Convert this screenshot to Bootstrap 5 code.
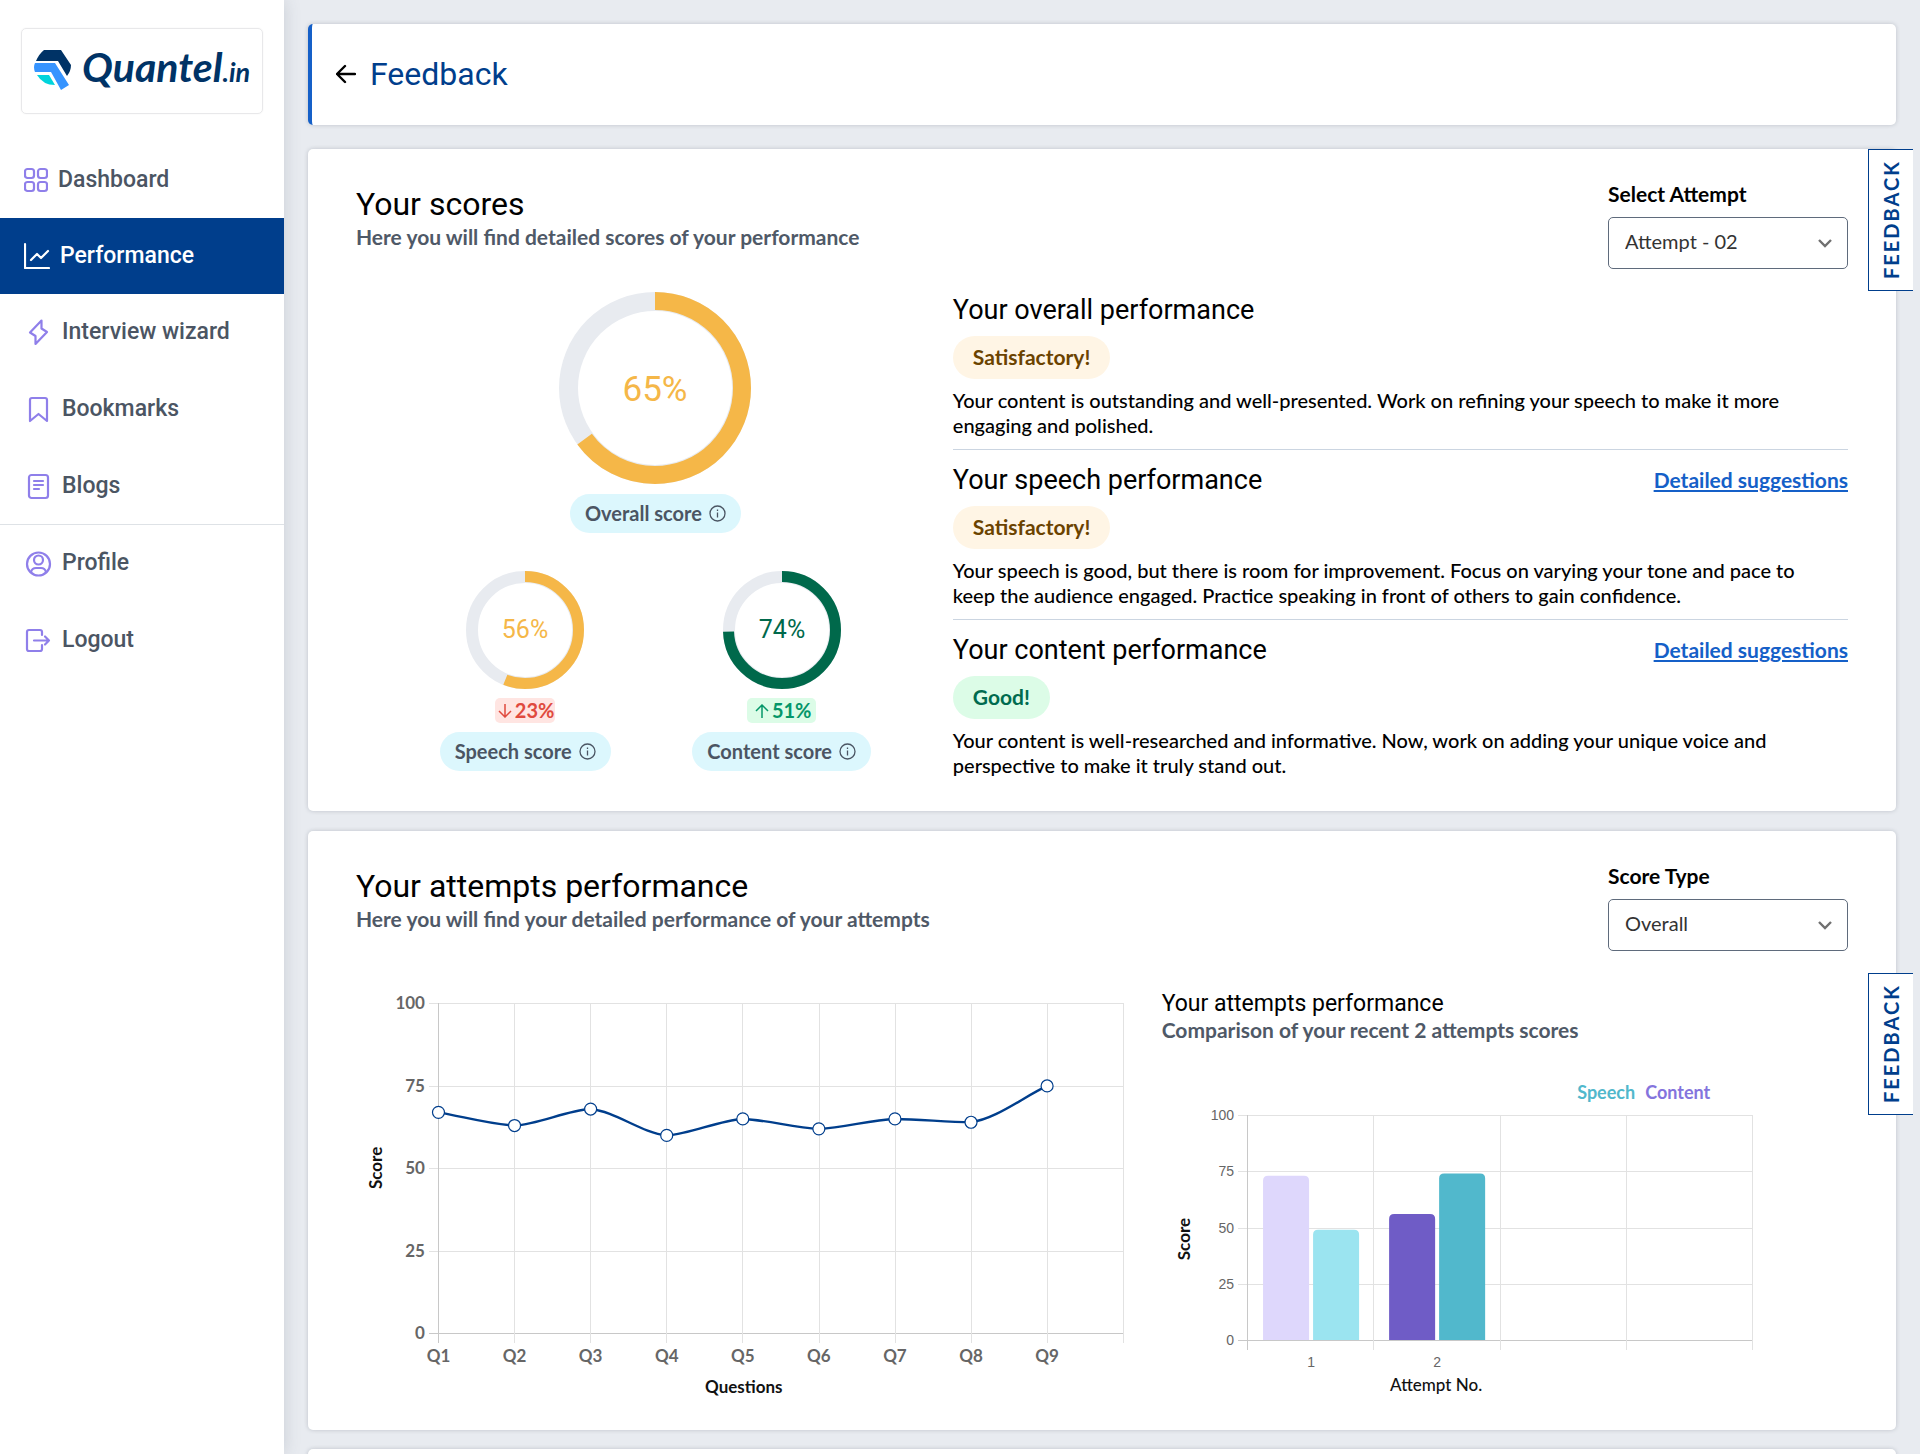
<!DOCTYPE html>
<html lang="en">
<head>
<meta charset="utf-8">
<meta name="viewport" content="width=device-width, initial-scale=1">
<title>Feedback - Quantel.in</title>
<link href="https://cdn.jsdelivr.net/npm/bootstrap@5.3.0/dist/css/bootstrap.min.css" rel="stylesheet">
<style>
:root{--navy:#003e8c;--blue:#1560c8;--violet:#8f7fea;--slate:#4b5563}
body{background:#e8ebf0;color:#000;font-family:Lato,"Open Sans",sans-serif;font-size:20px;line-height:25px}
h1,h2,h3,h4,.side-nav{font-family:Roboto,"Liberation Sans",sans-serif;font-weight:400;margin:0}
.side-panel{width:284px;background:#fff;box-shadow:0 0 16px rgba(60,70,90,.18)}
.brand-box{margin:28px 21px 27px;height:86px;border:1px solid #e8e8ea;border-radius:5px;padding:0 10px 3px 12px;box-shadow:0 0 2px rgba(0,0,0,.05);color:#003366;text-decoration:none}
.brand-name{font-size:41px;line-height:48px;font-weight:700;font-style:italic;margin-left:3px}
.brand-tld{font-size:27px}
.side-nav .nav-link{height:77px;padding:0 24px;color:var(--slate);font-size:23px;line-height:28px;font-weight:500;display:flex;align-items:center;gap:10px;border-radius:0}
.side-nav .nav-link.active{background:var(--navy);color:#fff}
.side-nav .nav-link.tight{height:76px}
.side-nav svg{flex:none;fill:none;stroke:var(--violet);stroke-width:2.2;stroke-linecap:round;stroke-linejoin:round}
.side-nav .active svg{stroke:#fff}
.main-area{padding:24px 24px 0}
.panel{background:#fff;border-radius:5px;box-shadow:0 0 4px rgba(40,50,70,.22);position:relative}
.head-panel{height:101px;border-left:4px solid var(--blue);padding:0 24px 2px;margin-bottom:24px;gap:14px}
.head-panel h1{color:var(--navy)}
.panel-body{padding:32px 48px}
.scores-panel{margin-bottom:20px;padding-bottom:33px}
.title-lg{font-size:32px;line-height:40px}
.title-md{font-size:27px;line-height:36px}
.title-sm{font-size:23px;line-height:27px}
.head-text{padding-top:3px}
.note{color:#4f5967;font-weight:700;font-size:21px}
.picker{width:240px}
.picker label{font-weight:700;margin-bottom:11px;display:block;font-size:21px}
.picker .form-select{height:52px;border:1px solid #5f6b7c;border-radius:5px;font-size:20px;padding:0 44px 4px 16px;color:#333;background-size:20px;background-position:right 12px center;background-image:url("data:image/svg+xml,%3csvg xmlns='http://www.w3.org/2000/svg' viewBox='0 0 20 20'%3e%3cpath fill='none' stroke='%23707070' stroke-width='2.4' d='M4 7l6 6 6-6'/%3e%3c/svg%3e")}
.scores-row{padding-top:23px}
.scores-col{width:40%;padding-left:2px}
.verdict-col{width:60%}
.big-ring{margin-bottom:10px}
.small-rings{margin-top:38px}
.pill-info{background:#dcf7fd;color:#4b5563;font-weight:700;height:39px;border-radius:20px;padding:0 15px;display:inline-flex;align-items:center;gap:7px;border:0}
.delta{font-weight:700;height:25px;border-radius:5px;display:flex;align-items:center;gap:3px;margin:9px 0}
.delta.down{background:#ffe5e2;color:#e04a3e;padding:0 1px 0 3px}
.delta.up{background:#dcfce7;color:#059669;padding:0 5px 0 8px}
.ring text{font-family:Roboto,sans-serif;text-anchor:middle}
.verdict{display:inline-flex;align-items:center;height:43px;border-radius:22px;padding:0 20px 2px;font-weight:700;font-size:21px;margin:8px 0 9px}
.verdict.fair{background:#fff5e5;color:#6b4300}
.verdict.fine{background:#dcfce7;color:#006b4f}
.verdict-item + .verdict-item{border-top:1px solid #cbd5e1;margin-top:11px;padding-top:12px}
.verdict-text{font-weight:500;margin:0;padding-right:24px}
.more-link{color:var(--blue);font-weight:700;font-size:21px;padding-bottom:2px}
.edge-tab{position:absolute;right:-17px;width:45px;height:142px;background:#fff;border:1px solid var(--navy);border-left-width:0;color:var(--navy);font-weight:700;font-size:20px;letter-spacing:2px;writing-mode:vertical-rl;transform:rotate(180deg);padding:0;text-align:center}
.tab-top{top:0}
.tab-mid{top:142px}
.charts-row{margin-top:35px}
.line-col{width:54%;padding-right:32px}
.bar-col{width:46%;padding-top:4px}
.bar-col .plot{margin-top:32px}
.plot{display:block;width:100%;height:auto}
.plot text{font-size:17px;font-weight:700;fill:#666}
.plot .axis-name{fill:#111}
.plot .plain{font-weight:500}
.plot .key-a,.plot .key-b{font-size:18px;fill:#51b8cc}
.plot .key-b{fill:#8474dd}
.plot .tick-sm{font-family:"Liberation Sans",sans-serif;font-size:14px;font-weight:400}
.next-panel{margin-top:19px;height:200px}
</style>
<script src="https://cdn.jsdelivr.net/npm/bootstrap@5.3.0/dist/js/bootstrap.bundle.min.js"></script>
</head>
<body>
<div class="d-flex vh-100 overflow-hidden">
  <aside class="side-panel flex-shrink-0 z-1">
    <a class="brand-box d-flex align-items-center" href="#">
      <svg class="flex-shrink-0 me-2" width="37" height="40" viewBox="0 0 37 40" aria-hidden="true"><path fill="#003366" d="M10 0h17l10 15q0 6-4 11l-9-15H2q3-7 8-11z"/><path fill="#3694ff" d="M1 13h20l14 22-8 5-10-18H1q-2-5 0-9z"/><path fill="#00d4dc" d="M3 25h12l6 10q-12 0-18-10z"/></svg>
      <span class="brand-name">Quantel<span class="brand-tld">.in</span></span>
    </a>
    <nav class="side-nav nav flex-column">
      <a class="nav-link" href="#"><svg width="24" height="26" viewBox="0 0 24 26"><rect x="1" y="2" width="9" height="9" rx="2.5"/><rect x="14" y="2" width="9" height="9" rx="2.5"/><rect x="1" y="15" width="9" height="9" rx="2.5"/><rect x="14" y="15" width="9" height="9" rx="2.5"/></svg>Dashboard</a>
      <a class="nav-link active tight" aria-current="page" href="#"><svg width="26" height="28" viewBox="0 0 26 28"><path d="M1 2v24h24M7 18l6-6 4 4 7-7"/></svg>Performance</a>
      <a class="nav-link tight" href="#"><svg width="28" height="28" viewBox="0 0 28 28"><path d="M17.500 2.500L6 14.500l5.500 3.500v8L23 14l-5.500-3.500z"/></svg>Interview wizard</a>
      <a class="nav-link" href="#"><svg width="28" height="28" viewBox="0 0 28 28"><path d="M6 26V5a2 2 0 0 1 2-2h13a2 2 0 0 1 2 2v21l-8.500-7z"/></svg>Bookmarks</a>
      <a class="nav-link" href="#"><svg width="28" height="28" viewBox="0 0 28 28"><rect x="5" y="3" width="19" height="23" rx="2.500"/><path d="M10 9h9M10 13h9M10 17h5"/></svg>Blogs</a>
      <a class="nav-link border-top" href="#"><svg width="28" height="28" viewBox="0 0 28 28"><circle cx="14.500" cy="15" r="11.500"/><circle cx="14.500" cy="11" r="4.500"/><path d="M7 23q1-4 5-4h5q4 0 5 4"/></svg>Profile</a>
      <a class="nav-link" href="#"><svg width="28" height="28" viewBox="0 0 28 28"><path d="M18 9V6a2 2 0 0 0-2-2H5a2 2 0 0 0-2 2v17a2 2 0 0 0 2 2h11a2 2 0 0 0 2-2v-4M10 14.500h15M21 10.500l4 4-4 4"/></svg>Logout</a>
    </nav>
  </aside>

  <main class="main-area flex-grow-1">
    <header class="panel head-panel d-flex align-items-center">
      <a href="#" class="lh-1 text-black" aria-label="Back"><svg class="d-block" width="20" height="20" viewBox="0 0 20 20" fill="none" stroke="currentColor" stroke-width="2.400" stroke-linecap="round" stroke-linejoin="round"><path d="M19 10H1M9 2l-8 8 8 8"/></svg></a>
      <h1 class="title-lg">Feedback</h1>
    </header>

    <section class="panel panel-body scores-panel">
      <button type="button" class="edge-tab tab-top">FEEDBACK</button>
      <div class="d-flex justify-content-between">
        <div class="head-text">
          <h2 class="title-lg">Your scores</h2>
          <div class="note">Here you will find detailed scores of your performance</div>
        </div>
        <div class="picker">
          <label for="attempt">Select Attempt</label>
          <select id="attempt" class="form-select"><option>Attempt - 02</option></select>
        </div>
      </div>
      <div class="d-flex scores-row">
        <div class="scores-col">
          <div class="d-flex flex-column align-items-center">
            <svg class="ring big-ring" width="192" height="192" viewBox="0 0 192 192" fill="none"><circle cx="96" cy="96" r="86.500" stroke="#e8ebf0" stroke-width="19"/><circle cx="96" cy="96" r="87" stroke="#f5b748" stroke-width="18" pathLength="100" stroke-dasharray="65 35" transform="rotate(-90 96 96)"/><text x="96" y="109" font-size="35" fill="#f5b748">65%</text></svg>
            <button type="button" class="pill-info">Overall score <svg width="17" height="17" viewBox="0 0 17 17" fill="none" stroke="currentColor" stroke-width="1.300"><circle cx="8.500" cy="8.500" r="7.500"/><path d="M8.500 7.500v5M8.500 4.500v1.500"/></svg></button>
          </div>
          <div class="d-flex justify-content-evenly small-rings">
            <div class="d-flex flex-column align-items-center">
              <svg class="ring" width="118" height="118" viewBox="0 0 118 118" fill="none"><circle cx="59" cy="59" r="53" stroke="#e8ebf0" stroke-width="12"/><circle cx="59" cy="59" r="53.500" stroke="#f5b748" stroke-width="11" pathLength="100" stroke-dasharray="56 44" transform="rotate(-90 59 59)"/><text x="59" y="67" font-size="25" fill="#f5b748">56%</text></svg>
              <div class="delta down"><svg width="14" height="14" viewBox="0 0 14 14" fill="none" stroke="currentColor" stroke-width="1.500"><path d="M7 0v13M1 7l6 6 6-6"/></svg>23%</div>
              <button type="button" class="pill-info">Speech score <svg width="17" height="17" viewBox="0 0 17 17" fill="none" stroke="currentColor" stroke-width="1.300"><circle cx="8.500" cy="8.500" r="7.500"/><path d="M8.500 7.500v5M8.500 4.500v1.500"/></svg></button>
            </div>
            <div class="d-flex flex-column align-items-center">
              <svg class="ring" width="118" height="118" viewBox="0 0 118 118" fill="none"><circle cx="59" cy="59" r="53" stroke="#e8ebf0" stroke-width="12"/><circle cx="59" cy="59" r="53.500" stroke="#00694b" stroke-width="11" pathLength="100" stroke-dasharray="74.500 25.500" transform="rotate(-90 59 59)"/><text x="59" y="67" font-size="25" fill="#00694b">74%</text></svg>
              <div class="delta up"><svg width="14" height="14" viewBox="0 0 14 14" fill="none" stroke="currentColor" stroke-width="1.500"><path d="M7 14V1M1 7l6-6 6 6"/></svg>51%</div>
              <button type="button" class="pill-info">Content score <svg width="17" height="17" viewBox="0 0 17 17" fill="none" stroke="currentColor" stroke-width="1.300"><circle cx="8.500" cy="8.500" r="7.500"/><path d="M8.500 7.500v5M8.500 4.500v1.500"/></svg></button>
            </div>
          </div>
        </div>
        <div class="verdict-col">
          <div class="verdict-item">
            <h3 class="title-md">Your overall performance</h3>
            <div class="verdict fair">Satisfactory!</div>
            <p class="verdict-text">Your content is outstanding and well-presented. Work on refining your speech to make it more engaging and polished.</p>
          </div>
          <div class="verdict-item">
            <div class="d-flex justify-content-between align-items-center"><h3 class="title-md">Your speech performance</h3><a class="more-link" href="#">Detailed suggestions</a></div>
            <div class="verdict fair">Satisfactory!</div>
            <p class="verdict-text">Your speech is good, but there is room for improvement. Focus on varying your tone and pace to keep the audience engaged. Practice speaking in front of others to gain confidence.</p>
          </div>
          <div class="verdict-item">
            <div class="d-flex justify-content-between align-items-center"><h3 class="title-md">Your content performance</h3><a class="more-link" href="#">Detailed suggestions</a></div>
            <div class="verdict fine">Good!</div>
            <p class="verdict-text">Your content is well-researched and informative. Now, work on adding your unique voice and perspective to make it truly stand out.</p>
          </div>
        </div>
      </div>
    </section>

    <section class="panel panel-body">
      <button type="button" class="edge-tab tab-mid">FEEDBACK</button>
      <div class="d-flex justify-content-between">
        <div class="head-text">
          <h2 class="title-lg">Your attempts performance</h2>
          <div class="note">Here you will find your detailed performance of your attempts</div>
        </div>
        <div class="picker">
          <label for="kind">Score Type</label>
          <select id="kind" class="form-select"><option>Overall</option></select>
        </div>
      </div>
      <div class="d-flex align-items-start charts-row">
        <div class="line-col"><svg class="plot" id="linePlot" viewBox="0 0 774 412" role="img" aria-label="Score by question"></svg></div>
        <div class="bar-col">
          <h3 class="title-sm">Your attempts performance</h3>
          <div class="note">Comparison of your recent 2 attempts scores</div>
          <svg class="plot" id="barPlot" viewBox="0 0 686 322" role="img" aria-label="Score by attempt"></svg>
        </div>
      </div>
    </section>
    <section class="panel next-panel"></section>
  </main>
</div>
<script>
const line = (x1, y1, x2, y2, c) => `<path d="M${x1} ${y1}L${x2} ${y2}" stroke="${c}" fill="none" shape-rendering="crispEdges"/>`;
const label = (x, y, t, anchor, extra = '') => `<text x="${x}" y="${y}" text-anchor="${anchor}" ${extra}>${t}</text>`;
function grid(x0, x1, cols, y0, y1, cls, dy) {
  let s = '';
  for (let i = 0; i <= 4; i++) {
    const y = Math.round(y0 + (y1 - y0) * i / 4) + .5;
    s += line(x0 - 9, y, x1, y, i === 4 ? '#c8c8c8' : '#e2e2e2');
    s += label(x0 - 13, y + dy, 100 - 25 * i, 'end', cls);
  }
  for (let i = 0; i <= cols; i++) {
    const x = Math.round(x0 + (x1 - x0) * i / cols) + .5;
    s += line(x, y0, x, y1 + 10, i ? '#e2e2e2' : '#c8c8c8');
  }
  return s;
}
// Score per question
const scores = [67, 63, 68, 60, 65, 62, 65, 64, 75];
const step = 685 / 9, pts = scores.map((v, i) => [82.5 + i * step, 347.5 - v * 3.3]);
let d = `M${pts[0]}`;
for (let i = 1; i < pts.length; i++) {
  const [ax, ay] = pts[i - 1], [bx, by] = pts[i], k = step / 3, m = (by - ay) / 3;
  d += `C${ax + k} ${i === 1 ? ay + m : ay + m * .3} ${bx - k} ${i === pts.length - 1 ? by - m : by - m * .3} ${bx} ${by}`;
}
linePlot.innerHTML = grid(82, 767, 9, 17, 347, '', 6)
  + `<path d="${d}" fill="none" stroke="#003e8c" stroke-width="2.4"/>`
  + pts.map(p => `<circle cx="${p[0]}" cy="${p[1]}" r="6" fill="#fff" stroke="#003e8c" stroke-width="1.2"/>`).join('')
  + pts.map((p, i) => label(p[0], 376, 'Q' + (i + 1), 'middle')).join('')
  + label(388, 407, 'Questions', 'middle', 'class="axis-name"')
  + `<text class="axis-name" text-anchor="middle" transform="translate(26 182) rotate(-90)">Score</text>`;
// Last two attempts
const bar = (x, v, c) => { const t = 266 - v * 2.25; return `<path fill="${c}" d="M${x} 266V${t + 5}q0-5 5-5h36q5 0 5 5V266z"/>`; };
barPlot.innerHTML = grid(85, 590, 4, 41, 266, 'class="tick-sm"', 4)
  + bar(101, 73, '#ded7fc') + bar(151, 49, '#9be4f0') + bar(227, 56, '#6f5cc6') + bar(277, 74, '#51b8cc')
  + label(149, 293, 1, 'middle', 'class="tick-sm"') + label(275, 293, 2, 'middle', 'class="tick-sm"')
  + label(415, 25, 'Speech', 'start', 'class="key-a"') + label(483, 25, 'Content', 'start', 'class="key-b"')
  + label(274, 317, 'Attempt No.', 'middle', 'class="axis-name plain"')
  + `<text class="axis-name" text-anchor="middle" transform="translate(28 165) rotate(-90)">Score</text>`;
</script>
</body>
</html>
